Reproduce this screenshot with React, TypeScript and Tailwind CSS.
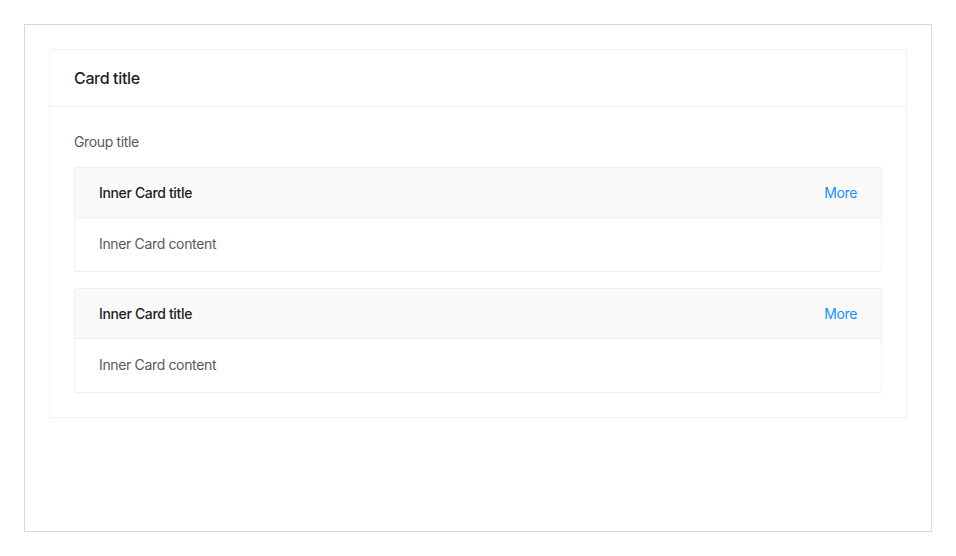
import React from "react";

function InnerCard({ title, children }: { title: string; children: React.ReactNode }) {
  return (
    <div className="border border-[#f0f0f0] rounded-[2px] bg-white">
      <div className="h-[50px] px-6 flex items-center justify-between bg-[#fafafa] border-b border-[#f0f0f0]">
        <span className="text-sm font-medium text-[#1f1f1f]">{title}</span>
        <a href="#" className="text-sm text-[#1890ff]">
          More
        </a>
      </div>
      <div className="px-6 pt-[15px] pb-4 text-sm leading-[22px] text-[#595959]">{children}</div>
    </div>
  );
}

export default function App() {
  return (
    <div
      className="h-[556px] p-6 bg-white tracking-[-0.35px]"
      style={{ fontFamily: "Inter, 'Noto Sans', sans-serif" }}
    >
      <div className="h-full border border-[#d9d9d9] p-6">
        <div className="border border-[#f0f0f0] rounded-[2px] bg-white">
          <div className="h-[57px] px-6 flex items-center border-b border-[#f0f0f0]">
            <span className="text-base font-medium text-[#1f1f1f]">Card title</span>
          </div>
          <div className="p-6">
            <div className="text-sm leading-[22px] text-[#595959] mb-[14px]">Group title</div>
            <div className="flex flex-col gap-4">
              <InnerCard title="Inner Card title">Inner Card content</InnerCard>
              <InnerCard title="Inner Card title">Inner Card content</InnerCard>
            </div>
          </div>
        </div>
      </div>
    </div>
  );
}
